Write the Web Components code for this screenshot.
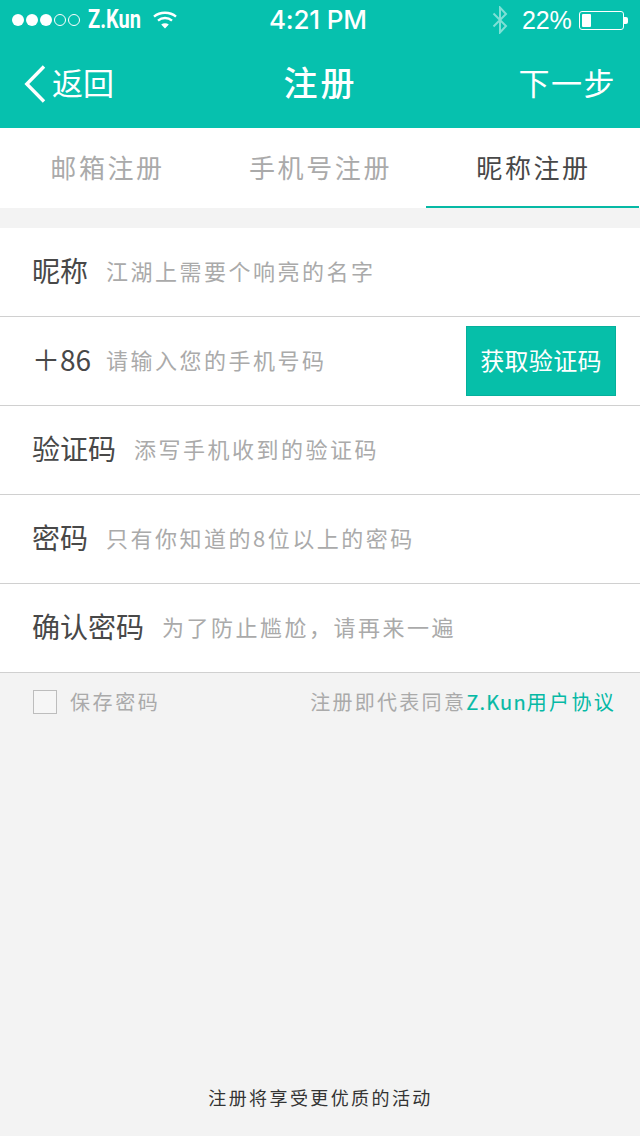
<!DOCTYPE html>
<html lang="zh-CN"><head><meta charset="utf-8"><title>注册</title>
<style>
html,body{margin:0;padding:0;height:100%}
body{width:640px;height:1136px;overflow:hidden;background:#f3f3f3;font-family:"Noto Sans CJK SC","Noto Sans",sans-serif}
reg-page{height:1136px}
</style></head><body>
<reg-page>
  <status-bar></status-bar>
  <nav-bar></nav-bar>
  <reg-tabs>
    <reg-tab>邮箱注册</reg-tab>
    <reg-tab>手机号注册</reg-tab>
    <reg-tab active>昵称注册</reg-tab>
  </reg-tabs>
  <form-list>
    <form-row label="昵称" hint="江湖上需要个响亮的名字"></form-row>
    <form-row label="＋86" hint="请输入您的手机号码" phone><code-button>获取验证码</code-button></form-row>
    <form-row label="验证码" hint="添写手机收到的验证码"></form-row>
    <form-row label="密码" hint="只有你知道的8位以上的密码"></form-row>
    <form-row label="确认密码" hint="为了防止尴尬，请再来一遍"></form-row>
  </form-list>
  <agree-row></agree-row>
  <page-footer>注册将享受更优质的活动</page-footer>
</reg-page>
<script>
function def(name, html){
  customElements.define(name, class extends HTMLElement{
    connectedCallback(){
      if(this.shadowRoot) return;
      const r=this.attachShadow({mode:'open'});
      r.innerHTML=typeof html==='function'?html(this):html;
    }
  });
}
const CJK='"Noto Sans CJK SC","Noto Sans",sans-serif';
def('reg-page',`<style>:host{display:flex;flex-direction:column;width:640px;background:#f3f3f3;font-family:${CJK}}</style><slot></slot>`);
def('status-bar',`<style>
:host{display:flex;align-items:center;height:40px;background:#06c1ae;color:#fff;padding:0 12px;box-sizing:border-box;font-family:"Liberation Sans",sans-serif;position:relative}
.dots{display:flex;gap:2px}
.d{width:12px;height:12px;border-radius:50%;background:#fff;box-sizing:border-box}
.d.o{background:none;border:1px solid #fff}
.car{font:700 25px "Roboto",sans-serif;display:inline-block;transform:scaleX(.8);transform-origin:left center;width:52px;margin-left:8px;white-space:nowrap;line-height:40px;letter-spacing:0}
.wifi{margin-left:13px;display:block}
.time{position:absolute;left:269px;top:0;font:500 26px/40px "Inter","Liberation Sans",sans-serif;letter-spacing:-.2px;white-space:nowrap}
.right{margin-left:auto;display:flex;align-items:center}
.bt{display:block;margin-right:14px}
.pct{font:400 25px/40px "Liberation Sans",sans-serif;width:57px;white-space:nowrap;letter-spacing:-.2px}
.bat{display:flex;align-items:center;margin-top:1px}
.body{width:45px;height:19px;border:1px solid #fff;border-radius:3px;box-sizing:border-box;padding:2px}
.fill{width:9px;height:100%;background:#fff;border-radius:1px}
.nub{width:4px;height:7px;background:#fff;border-radius:0 2px 2px 0}
</style>
<div class="dots"><i class="d"></i><i class="d"></i><i class="d"></i><i class="d o"></i><i class="d o"></i></div>
<span class="car">Z.Kun</span>
<svg class="wifi" width="24" height="20" viewBox="0 0 24 20" fill="none" stroke="#fff" stroke-width="2.4"><path d="M1 6.6C7 1.4 17 1.4 23 6.6"/><path d="M5 10.6C9 7.2 15 7.2 19 10.6"/><path d="M12 18.6L8.2 14.4C10.4 12.8 13.6 12.8 15.8 14.4Z" fill="#fff" stroke="none"/></svg>
<span class="time">4:21 PM</span>
<div class="right">
<svg class="bt" width="16" height="28" viewBox="0 0 16 28" fill="none" stroke="#7fe0d6" stroke-width="2"><path d="M1.5 7.5L14 20L8 26.5V1.5L14 8L1.5 20.5"/></svg>
<span class="pct">22%</span>
<div class="bat"><div class="body"><div class="fill"></div></div><div class="nub"></div></div>
</div>`);
def('nav-bar',`<style>
:host{display:flex;align-items:center;height:88px;background:#06c1ae;color:#fff;padding:0 24px 0 24px;box-sizing:border-box;position:relative;font-size:31px}
.back{display:flex;align-items:center;gap:6px}
.back span{letter-spacing:0;padding-bottom:5px}
svg{display:block}
.title{position:absolute;left:0;right:0;top:0;bottom:0;display:flex;align-items:center;justify-content:center;font-size:34px;letter-spacing:3px;font-weight:500;padding:0 0 5px 1px}
.next{margin-left:auto;letter-spacing:1.5px;padding-bottom:5px}
</style>
<div class="back"><svg width="22" height="38" viewBox="0 0 22 38" fill="none" stroke="#fff" stroke-width="3.4"><path d="M20 1.5L2.8 19L20 36.5"/></svg><span>返回</span></div>
<div class="title">注册</div><div class="next">下一步</div>`);
def('reg-tabs',`<style>:host{display:flex;height:80px;background:#fff}</style><slot></slot>`);
def('reg-tab',`<style>
:host{flex:1;display:flex;align-items:center;justify-content:center;box-sizing:border-box;color:#aaa;font-size:26px;letter-spacing:2.6px;height:80px;padding:0 0 4px 2px}
:host([active]){color:#484848;border-bottom:2px solid #06b9a5;padding-bottom:2px;margin-right:1px}
</style><slot></slot>`);
def('form-list',`<style>:host{display:block;margin-top:20px;background:#fff}</style><slot></slot>`);
def('form-row',h=>{
  const phone=h.hasAttribute('phone');
  return `<style>
:host{display:flex;align-items:center;height:89px;box-sizing:border-box;border-bottom:1px solid #d0d0d0;padding:0 24px 0 32px}
span{padding-bottom:4px}
.l{color:#484848;font-size:28px;margin-right:18px;white-space:nowrap}
.l.p{margin-right:15px}
.h{color:#aaa;font-size:22px;letter-spacing:2.5px;white-space:nowrap}
.s{margin-left:auto;display:flex}
</style><span class="l${phone?' p':''}">${h.getAttribute('label')}</span><span class="h">${h.getAttribute('hint')}</span><div class="s"><slot></slot></div>`;
});
def('code-button',`<style>
:host{display:flex;align-items:center;justify-content:center;width:150px;height:70px;box-sizing:border-box;background:#06bfa9;border:1px solid #05b09c;color:#fff;font-size:24px;letter-spacing:.3px;padding-bottom:4px}
</style><slot></slot>`);
def('agree-row',`<style>
:host{display:flex;align-items:center;height:60px;padding:0 24px 2px 33px;box-sizing:border-box;font-size:20px;letter-spacing:2.3px;color:#aaa}
.c{width:24px;height:24px;border:1px solid #bdbdbd;background:#f6f6f6;box-sizing:border-box;margin-right:13px}
span+span{padding-bottom:2px}
.s{letter-spacing:2.6px}
.r{margin-left:auto;white-space:nowrap}
b{font-weight:400;color:#06b9a5}
i{font-style:normal;letter-spacing:1.2px;-webkit-text-stroke:.2px #06b9a5}
</style><span class="c"></span><span class="s">保存密码</span><span class="r">注册即代表同意<b><i>Z.Kun</i>用户协议</b></span>`);
def('page-footer',`<style>
:host{display:block;margin-top:auto;text-align:center;color:#333;font-size:18px;letter-spacing:2.4px;padding:0 0 26px 1px;line-height:26px}
</style><slot></slot>`);
</script>
</body></html>
